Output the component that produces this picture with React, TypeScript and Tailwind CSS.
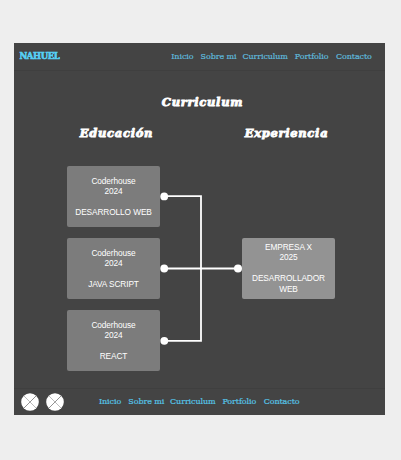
import React from "react";

const links = [
  { label: "Inicio", box: "w-[23px]" },
  { label: "Sobre mi", box: "w-[35.5px]" },
  { label: "Curriculum", box: "w-[46px]" },
  { label: "Portfolio", box: "w-[35px]" },
  { label: "Contacto", box: "w-[36px]" },
];

function Nav({ className }: { className: string }) {
  return (
    <nav
      className={`flex gap-[6.3px] font-['DejaVu_Serif',serif] text-[8px] leading-[12px] tracking-[-0.1px] [-webkit-text-stroke:0.2px_currentColor] ${className}`}
    >
      {links.map((l) => (
        <a key={l.label} className={`${l.box} whitespace-nowrap`}>
          {l.label}
        </a>
      ))}
    </nav>
  );
}

function Heading({ text, className }: { text: string; className: string }) {
  return (
    <h2
      className={`whitespace-nowrap text-center font-['DejaVu_Serif',serif] text-[11.5px] font-bold italic leading-[16px] tracking-[0.7px] text-white [-webkit-text-stroke:0.9px_white] ${className}`}
    >
      {text}
    </h2>
  );
}

function Card({ lines, className }: { lines: string[]; className: string }) {
  return (
    <div
      className={`flex h-[61px] w-[93px] flex-col items-center justify-center rounded-[2px] text-[8.3px] leading-[10.4px] tracking-[-0.1px] text-white ${className}`}
    >
      {lines.map((line, i) => (
        <p key={i} className="h-[10.4px] whitespace-nowrap">
          {line}
        </p>
      ))}
    </div>
  );
}

function Connectors() {
  return (
    <svg width="82" height="206" viewBox="0 0 82 206" fill="none" stroke="white" strokeWidth="1.8">
      <path d="M4 30.2H41V174.8H4M4 102.5H78" />
      <g fill="white" stroke="none">
        <circle cx="4.2" cy="30.4" r="3.9" />
        <circle cx="4.2" cy="102.5" r="3.9" />
        <circle cx="4.3" cy="174.8" r="3.9" />
        <circle cx="78" cy="102.5" r="4" />
      </g>
    </svg>
  );
}

function Social() {
  return (
    <svg width="18" height="18" viewBox="0 0 18 18">
      <circle cx="9" cy="9" r="8.8" fill="white" />
      <path d="M3 3L15 15" stroke="#aaaaaa" strokeWidth="0.8" />
      <path d="M3 15L15 3" stroke="#858585" strokeWidth="0.9" />
    </svg>
  );
}

export default function App() {
  return (
    <div className="h-[460px] w-[401px] bg-[#eeeeee] pl-[14px] pt-[43px] font-['Liberation_Sans',Arial,sans-serif]">
      <div className="flex h-[372px] w-[370.5px] flex-col bg-[#444444]">
        <header className="flex h-[28px] items-center justify-between border-b border-[#3f3f3f] pl-[5.5px] pr-[12.5px]">
          <span className="mt-[-1px] font-['DejaVu_Serif',serif] text-[8.5px] font-bold leading-[12px] tracking-[-0.4px] text-[#56d0f4] [-webkit-text-stroke:0.6px_#56d0f4]">
            NAHUEL
          </span>
          <Nav className="text-[#5fb9dc]" />
        </header>
        <main className="h-[316.5px]">
          <Heading text="Curriculum" className="ml-[138px] mt-[22.5px] w-[101px]" />
          <div className="mt-[15px] flex pl-[52px]">
            <Heading text="Educación" className="w-[101px]" />
            <Heading text="Experiencia" className="ml-[69px] w-[101px]" />
          </div>
          <div className="mt-[25px] flex items-center pl-[53px]">
            <div className="flex flex-col gap-[11.2px]">
              <Card className="bg-[#7c7c7c]" lines={["Coderhouse", "2024", "", "DESARROLLO WEB"]} />
              <Card className="bg-[#7c7c7c]" lines={["Coderhouse", "2024", "", "JAVA SCRIPT"]} />
              <Card className="bg-[#7c7c7c]" lines={["Coderhouse", "2024", "", "REACT"]} />
            </div>
            <Connectors />
            <Card className="bg-[#939393] pb-[1px]" lines={["EMPRESA X", "2025", "", "DESARROLLADOR", "WEB"]} />
          </div>
        </main>
        <footer className="flex h-[27px] items-center border-t border-[#3f3f3f] pl-[6.5px]">
          <div className="mr-[35.5px] flex gap-[7px]">
            <Social />
            <Social />
          </div>
          <Nav className="text-[#56c4e8]" />
        </footer>
      </div>
    </div>
  );
}
